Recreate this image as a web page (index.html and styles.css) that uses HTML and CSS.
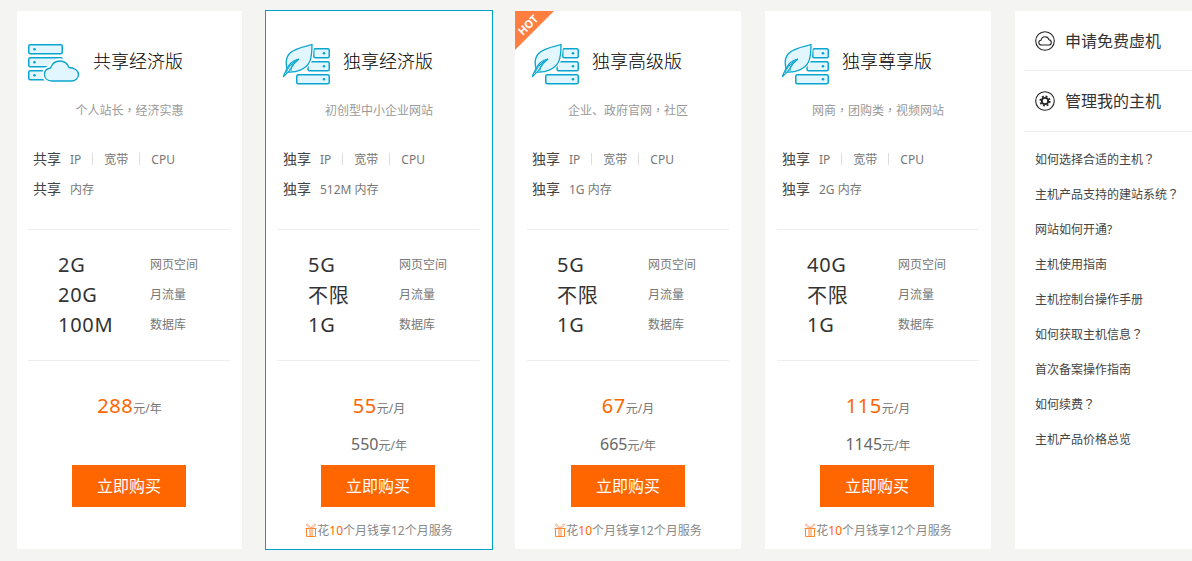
FILE: index.html
```html
<!DOCTYPE html>
<html lang="zh-CN">
  <head>
    <meta charset="UTF-8" />
    <title>虚拟主机</title>
    <link rel="stylesheet" href="styles.css">
  </head>
  <body>
    <svg class="defs" width="0" height="0">
      <symbol id="gift" viewBox="0 0 12 14">
        <path d="M.5 5.500h11M1.500 5.500V13.500h9V5.500M5 5.500V13.500M7 5.500V13.500" fill="none" stroke="#ff7a1a" stroke-width=".9"/>
        <path d="M6 5.500C4.500 3 3 1 2 1 1 1 1.500 4 6 5.500 10.500 4 11 1 10 1 9 1 7.500 3 6 5.500Z" fill="none" stroke="#f79a6a" stroke-width=".9"/>
      </symbol>
      <symbol id="leaf-server" viewBox="0 0 47 41">
        <g fill="#e1f6fe" stroke="#09a5cf" stroke-width="1.500">
          <rect x="30.750" y="4.750" width="15.500" height="9" rx="1.500"/>
          <rect x="25" y="17.750" width="21.250" height="9" rx="1.500"/>
          <rect x="13.750" y="30.750" width="32.500" height="9" rx="1.500"/>
        </g>
        <g fill="#09a5cf">
          <circle cx="41" cy="9.250" r="1.300"/>
          <circle cx="41" cy="22.250" r="1.300"/>
          <circle cx="41" cy="35.250" r="1.300"/>
        </g>
        <path d="M29 .5C26 2 13 3 6.500 9.500 2.500 14 2.500 21 5 28 14 28.500 23 25 26.500 18 29 13 29 5 29 .5Z" fill="#e1f6fe" stroke="#fff" stroke-width="3.500"/>
        <path d="M29 .5C26 2 13 3 6.500 9.500 2.500 14 2.500 21 5 28 14 28.500 23 25 26.500 18 29 13 29 5 29 .5Z" fill="#e1f6fe" stroke="#09a5cf" stroke-width="1.300"/>
        <path d="M0 33C3 27 4 23 8 19 10 17 13 15.500 16 15 12 18 9 22 7.500 25 5 29 2 31 0 33Z" fill="#fff" stroke="#09a5cf" stroke-width="1.200"/>
        <path d="M3 29C5 24 8 20 13 16.500M8 27C8 22 10 19 14 15.500" fill="none" stroke="#09a5cf" stroke-width="1"/>
      </symbol>
    </svg>

    <div class="page">
      <div class="plan plan-shared">
        <div class="plan-head">
          <svg class="icon-cloud" viewBox="0 0 52 38" width="52" height="38">
            <g fill="#e1f6fe" stroke="#09a5cf" stroke-width="1.500">
              <rect x=".75" y=".75" width="33.500" height="9" rx="1.500"/>
              <rect x=".75" y="13.750" width="33.500" height="9" rx="1.500"/>
              <rect x=".75" y="26.750" width="33.500" height="9" rx="1.500"/>
            </g>
            <g fill="#09a5cf">
              <circle cx="6.500" cy="5.250" r="1.300"/>
              <circle cx="6.500" cy="18.250" r="1.300"/>
              <circle cx="6.500" cy="31.250" r="1.300"/>
            </g>
            <path d="M24 37C19 37 16.500 34 16.500 30.500 16.500 27 19 24.500 22.500 24 24 19.500 28 17 32 17 36 17 39.500 19.500 41 23.500 46 23.500 50.500 26.500 50.500 30.500 50.500 34.500 47 37 43.500 37Z" fill="#e1f6fe" stroke="#fff" stroke-width="5"/>
            <path d="M24 37C19 37 16.500 34 16.500 30.500 16.500 27 19 24.500 22.500 24 24 19.500 28 17 32 17 36 17 39.500 19.500 41 23.500 46 23.500 50.500 26.500 50.500 30.500 50.500 34.500 47 37 43.500 37Z" fill="#e1f6fe" stroke="#09a5cf" stroke-width="1.300"/>
          </svg>
          <h3>共享经济版</h3>
        </div>
        <p class="slogan">个人站长<span class="mark" lang="zh-TW">，</span>经济实惠</p>
        <div class="specs">
          <div class="spec-row"><b>共享</b><span>IP</span><i></i><span>宽带</span><i></i><span>CPU</span></div>
          <div class="spec-row"><b>共享</b><span>内存</span></div>
        </div>
        <div class="rule"></div>
        <div class="quota">
          <strong>2G</strong><span>网页空间</span>
          <strong>20G</strong><span>月流量</span>
          <strong>100M</strong><span>数据库</span>
        </div>
        <div class="rule"></div>
        <div class="prices">
          <div class="price"><em>288</em>元/年</div>
        </div>
        <a class="buy">立即购买</a>
      </div>

      <div class="plan plan-basic">
        <div class="plan-head">
          <svg class="icon-leaf"><use href="#leaf-server"/></svg>
          <h3>独享经济版</h3>
        </div>
        <p class="slogan">初创型中小企业网站</p>
        <div class="specs">
          <div class="spec-row"><b>独享</b><span>IP</span><i></i><span>宽带</span><i></i><span>CPU</span></div>
          <div class="spec-row"><b>独享</b><span>512M 内存</span></div>
        </div>
        <div class="rule"></div>
        <div class="quota">
          <strong>5G</strong><span>网页空间</span>
          <strong>不限</strong><span>月流量</span>
          <strong>1G</strong><span>数据库</span>
        </div>
        <div class="rule"></div>
        <div class="prices">
          <div class="price"><em>55</em>元/月</div>
          <div class="price price-year"><u>550</u>元/年</div>
        </div>
        <a class="buy">立即购买</a>
        <p class="promo"><svg class="gift"><use href="#gift"/></svg>花<em>10</em>个月钱享12个月服务</p>
      </div>

      <div class="plan plan-high">
        <span class="hot"><span>HOT</span></span>
        <div class="plan-head">
          <svg class="icon-leaf"><use href="#leaf-server"/></svg>
          <h3>独享高级版</h3>
        </div>
        <p class="slogan">企业、政府官网<span class="mark" lang="zh-TW">，</span>社区</p>
        <div class="specs">
          <div class="spec-row"><b>独享</b><span>IP</span><i></i><span>宽带</span><i></i><span>CPU</span></div>
          <div class="spec-row"><b>独享</b><span>1G 内存</span></div>
        </div>
        <div class="rule"></div>
        <div class="quota">
          <strong>5G</strong><span>网页空间</span>
          <strong>不限</strong><span>月流量</span>
          <strong>1G</strong><span>数据库</span>
        </div>
        <div class="rule"></div>
        <div class="prices">
          <div class="price"><em>67</em>元/月</div>
          <div class="price price-year"><u>665</u>元/年</div>
        </div>
        <a class="buy">立即购买</a>
        <p class="promo"><svg class="gift"><use href="#gift"/></svg>花<em>10</em>个月钱享12个月服务</p>
      </div>

      <div class="plan plan-top">
        <div class="plan-head">
          <svg class="icon-leaf"><use href="#leaf-server"/></svg>
          <h3>独享尊享版</h3>
        </div>
        <p class="slogan">网商<span class="mark" lang="zh-TW">，</span>团购类<span class="mark" lang="zh-TW">，</span>视频网站</p>
        <div class="specs">
          <div class="spec-row"><b>独享</b><span>IP</span><i></i><span>宽带</span><i></i><span>CPU</span></div>
          <div class="spec-row"><b>独享</b><span>2G 内存</span></div>
        </div>
        <div class="rule"></div>
        <div class="quota">
          <strong>40G</strong><span>网页空间</span>
          <strong>不限</strong><span>月流量</span>
          <strong>1G</strong><span>数据库</span>
        </div>
        <div class="rule"></div>
        <div class="prices">
          <div class="price"><em>115</em>元/月</div>
          <div class="price price-year"><u>1145</u>元/年</div>
        </div>
        <a class="buy">立即购买</a>
        <p class="promo"><svg class="gift"><use href="#gift"/></svg>花<em>10</em>个月钱享12个月服务</p>
      </div>

      <div class="side">
        <div class="side-head">
          <svg viewBox="0 0 20 20" width="20" height="20" fill="none" stroke="#222" stroke-width="1.100">
            <circle cx="10" cy="10" r="9.300"/>
            <path d="M6.500 14C4.800 14 3.800 12.800 3.800 11.500 3.800 10.200 4.800 9.300 6 9.200 6.500 7 8.200 5.800 10 5.800 12 5.800 13.500 7 14 8.800 15.500 9 16.300 10 16.300 11.400 16.300 12.900 15.200 14 13.800 14Z"/>
          </svg>
          <span>申请免费虚机</span>
        </div>
        <div class="side-head side-manage">
          <svg viewBox="0 0 20 20" width="20" height="20" fill="none" stroke="#222">
            <circle cx="10" cy="10" r="9.300" stroke-width="1.100"/>
            <circle cx="10" cy="10" r="3.200" stroke-width="1.800"/>
            <circle cx="10" cy="10" r="4.800" stroke-width="1.600" stroke-dasharray="1.900 1.870"/>
          </svg>
          <span>管理我的主机</span>
        </div>
        <ul class="side-links">
          <li>如何选择合适的主机<span class="mark" lang="zh-TW">？</span></li>
          <li>主机产品支持的建站系统<span class="mark" lang="zh-TW">？</span></li>
          <li>网站如何开通?</li>
          <li>主机使用指南</li>
          <li>主机控制台操作手册</li>
          <li>如何获取主机信息<span class="mark" lang="zh-TW">？</span></li>
          <li>首次备案操作指南</li>
          <li>如何续费<span class="mark" lang="zh-TW">？</span></li>
          <li>主机产品价格总览</li>
        </ul>
      </div>
    </div>
  </body>
</html>
```

FILE: styles.css
```css
* {
  box-sizing: border-box;
}
html, body {
  margin: 0;
  height: 561px;
  overflow: hidden;
}
body {
  background: #f4f4f2;
  font-family: "Noto Sans", "Noto Sans CJK SC", sans-serif;
  color: #333;
}
.defs {
  position: absolute;
}
.mark {
  font-family: "Noto Sans CJK TC", sans-serif;
  line-height: 0;
}
.page {
  display: flex;
  align-items: flex-start;
  padding: 11px 0 0 17px;
}
.plan {
  position: relative;
  width: 226px;
  height: 538px;
  margin-left: 24px;
  padding-top: 33px;
  background: #fff;
}
.plan-shared {
  width: 225px;
  margin-left: 0;
}
.plan-basic {
  width: 228px;
  height: 540px;
  margin: -1px 0 0 23px;
  border: 1px solid #00a2ca;
}
.plan-high {
  margin-left: 22px;
}
.plan-head {
  display: flex;
  align-items: flex-start;
  height: 34px;
  padding-left: 17px;
}
.plan-shared .plan-head {
  padding-left: 11px;
}
.plan-head h3 {
  margin: 0 0 0 13px;
  font-size: 18px;
  font-weight: 300;
  line-height: 34px;
  color: #000;
}
.icon-leaf {
  flex: none;
  width: 47px;
  height: 41px;
}
.icon-cloud {
  flex: none;
}
.slogan {
  margin: 23px 0 0;
  font-size: 12px;
  line-height: 20px;
  text-align: center;
  color: #999;
}
.specs {
  margin-top: 23px;
  padding-left: 17px;
}
.plan-shared .specs {
  padding-left: 16px;
}
.spec-row {
  display: flex;
  align-items: center;
  height: 30px;
  font-size: 12px;
  color: #777;
}
.spec-row b {
  margin: -2px 9px 0 0;
  font-size: 14px;
  font-weight: normal;
  color: #444;
}
.spec-row i {
  width: 1px;
  height: 12px;
  margin: 0 11px;
  background: #ddd;
}
.rule {
  height: 1px;
  margin: 25px 12px 0 11px;
  background: #eee;
}
.plan-high .rule, .plan-top .rule {
  margin-left: 12px;
}
.quota {
  display: grid;
  grid-template-columns: 91px auto;
  grid-auto-rows: 30px;
  align-items: center;
  margin: 19px 0 -4px;
  padding-left: 42px;
}
.plan-shared .quota {
  grid-template-columns: 92px auto;
  padding-left: 41px;
}
.quota strong {
  font-size: 20px;
  font-weight: normal;
  letter-spacing: .7px;
  color: #333;
}
.quota span {
  font-size: 12px;
  color: #777;
}
.prices {
  height: 68px;
  margin-top: 30px;
  text-align: center;
}
.price {
  height: 30px;
  font-size: 12px;
  line-height: 30px;
  color: #777;
}
.price em {
  font-size: 20px;
  font-style: normal;
  font-weight: normal;
  letter-spacing: .5px;
  color: #ff6600;
}
.price-year {
  margin-top: 8px;
}
.price-year u {
  font-size: 16px;
  text-decoration: none;
  color: #666;
}
.buy {
  display: block;
  width: 114px;
  height: 42px;
  margin: 6px 0 0 55px;
  background: #ff6600;
  font-size: 16px;
  line-height: 42px;
  text-align: center;
  color: #fff;
}
.plan-high .buy {
  margin-left: 56px;
}
.promo {
  margin: 14px 0 0;
  font-size: 12px;
  line-height: 20px;
  text-align: center;
  color: #888;
}
.promo em {
  font-style: normal;
  color: #ff6600;
}
.gift {
  width: 12px;
  height: 14px;
  vertical-align: -2px;
}
.hot {
  position: absolute;
  left: 0;
  top: 0;
  width: 39px;
  height: 39px;
  background: #ff7e40;
  clip-path: polygon(0 0, 100% 0, 0 100%);
}
.hot span {
  position: absolute;
  left: 1px;
  top: 8px;
  width: 24px;
  font-size: 11px;
  font-weight: bold;
  line-height: 12px;
  text-align: center;
  color: #fff;
  transform: rotate(-45deg);
}
.side {
  width: 177px;
  height: 538px;
  margin-left: 24px;
  padding-left: 9px;
  background: #fff;
}
.side-head {
  display: flex;
  align-items: center;
  gap: 10px;
  height: 60px;
  padding-left: 11px;
  border-bottom: 1px solid #eee;
  font-size: 16px;
  color: #333;
}
.side-head span {
  margin-top: -2px;
}
.side-manage {
  height: 61px;
}
.side-links {
  margin: 10px 0 0;
  padding: 0 0 0 11px;
  list-style: none;
  font-size: 12px;
  line-height: 35px;
  color: #444;
}
```
